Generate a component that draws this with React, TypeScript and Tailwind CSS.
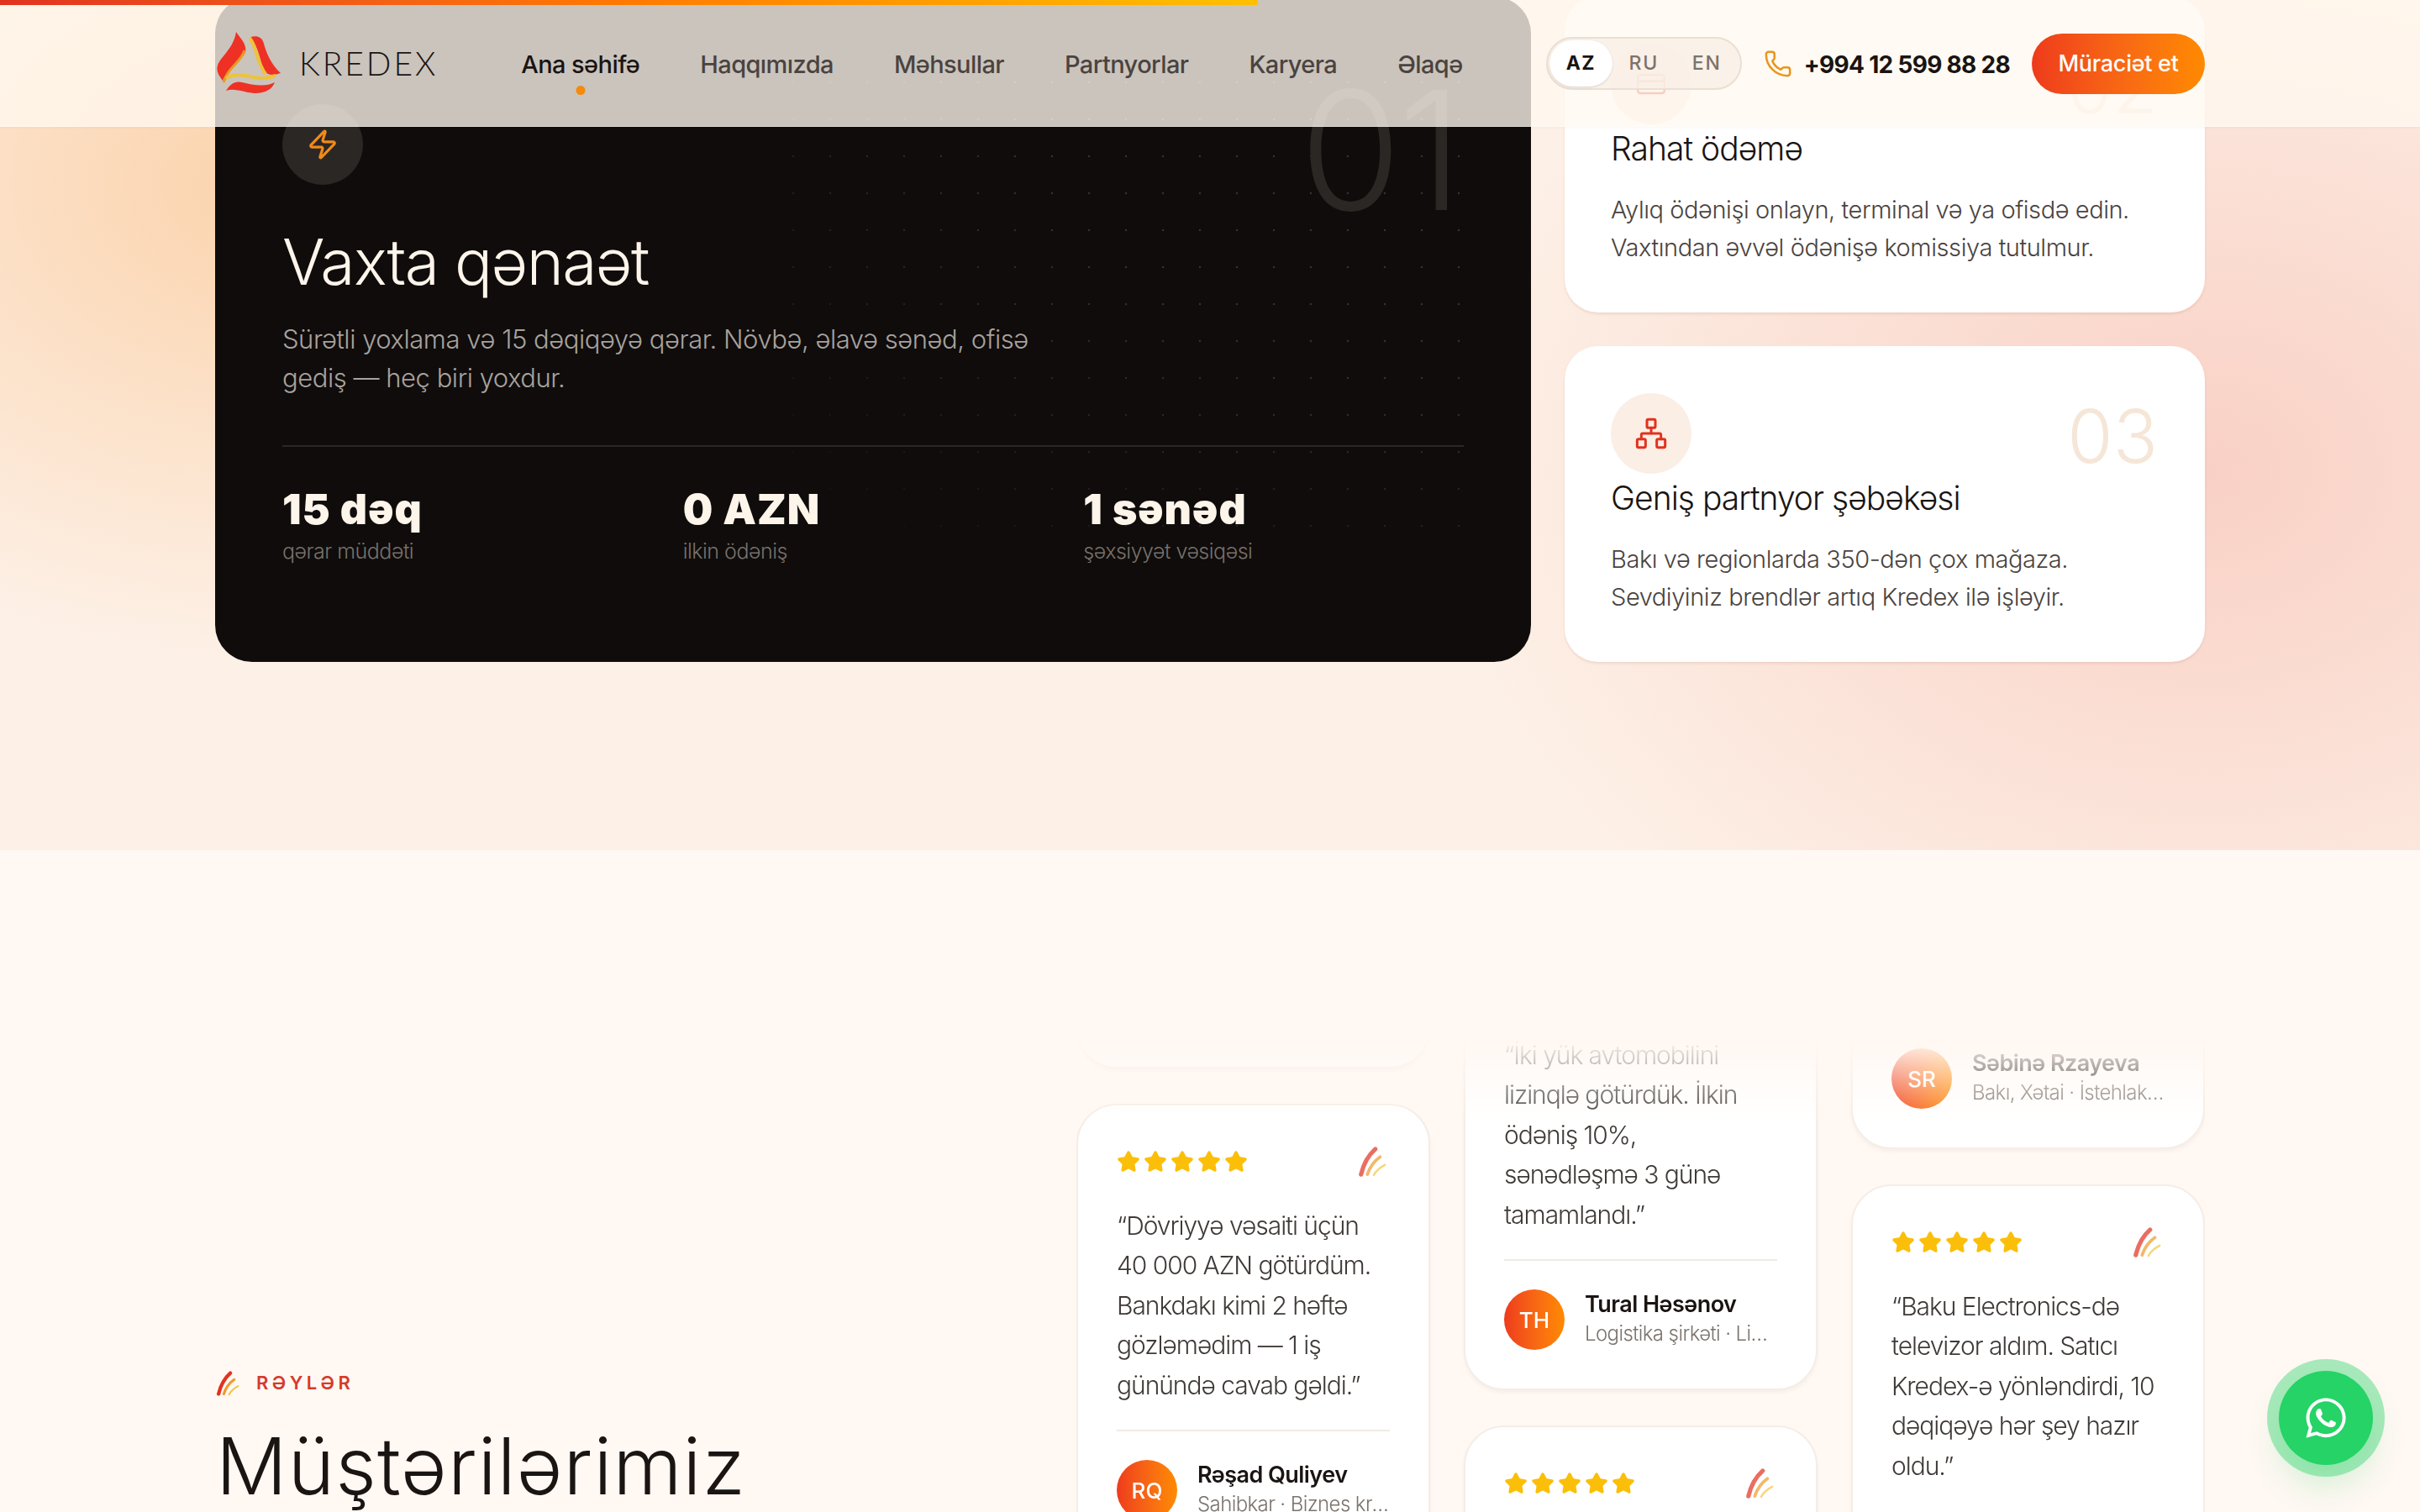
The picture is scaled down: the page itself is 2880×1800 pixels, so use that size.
import { CreditCard, Network, Phone, Star, Zap } from 'lucide-react';
import { FaWhatsapp } from 'react-icons/fa';

const navItems = ['Ana səhifə', 'Haqqımızda', 'Məhsullar', 'Partnyorlar', 'Karyera', 'Əlaqə'];

const stats = [
  { value: '15 dəq', label: 'qərar müddəti' },
  { value: '0 AZN', label: 'ilkin ödəniş' },
  { value: '1 sənəd', label: 'şəxsiyyət vəsiqəsi' },
];

type Review = {
  quote?: string[];
  name?: string;
  role?: string;
  initials?: string;
};

const columns: { offset: string; reviews: Review[] }[] = [
  {
    offset: '-mt-[508px]',
    reviews: [
      {},
      {
        quote: ['“Dövriyyə vəsaiti üçün', '40 000 AZN götürdüm.', 'Bankdakı kimi 2 həftə', 'gözləmədim — 1 iş', 'günündə cavab gəldi.”'],
        name: 'Rəşad Quliyev',
        role: 'Sahibkar · Biznes kredit',
        initials: 'RQ',
      },
    ],
  },
  {
    offset: '-mt-[125px]',
    reviews: [
      {
        quote: ['“İki yük avtomobilini', 'lizinqlə götürdük. İlkin', 'ödəniş 10%,', 'sənədləşmə 3 günə', 'tamamlandı.”'],
        name: 'Tural Həsənov',
        role: 'Logistika şirkəti · Lizinq',
        initials: 'TH',
      },
      {},
    ],
  },
  {
    offset: '-mt-[412px]',
    reviews: [
      { name: 'Səbinə Rzayeva', role: 'Bakı, Xətai · İstehlak krediti', initials: 'SR' },
      {
        quote: ['“Baku Electronics-də', 'televizor aldım. Satıcı', 'Kredex-ə yönləndirdi, 10', 'dəqiqəyə hər şey hazır', 'oldu.”'],
      },
    ],
  },
];

function BrandMark({ className }: { className: string }) {
  return (
    <svg viewBox="0 0 36 38" fill="none" strokeLinecap="round" className={className}>
      <path d="M22 3C13 11 7 22 4 35" stroke="#e1321f" strokeWidth="5.5" />
      <path d="M28 13C21 18 15 26 12 35" stroke="#ef9a2a" strokeWidth="4" />
      <path d="M34 23C28 26 23 30 20 36" stroke="#f4c542" strokeWidth="2.6" />
    </svg>
  );
}

function Logo() {
  return (
    <svg viewBox="0 0 78 74" fill="none" className="h-[74px] w-[78px] shrink-0">
      <path d="M23 0C28 8 36 14 34 24C30 34 14 42 7 58C2 52-1 46 1 40C4 30 20 20 23 0Z" fill="#ee3124" />
      <path d="M33 22C29 36 13 42 8 60" stroke="#e99a20" strokeWidth="3" />
      <path d="M40 6C48 4 54 6 56 14C59 26 66 40 76 49C68 52 60 52 56 46C52 36 50 18 40 6Z" fill="#ee3124" />
      <path d="M39 7C48 18 47 36 58 50" stroke="#eec23a" strokeWidth="4" />
      <path d="M11 70C16 62 22 58 30 60C42 63 58 66 69 60C66 68 58 73 46 73C34 73 22 66 11 70Z" fill="#ee3124" />
      <path d="M11 55C24 47 40 54 50 55C58 56 64 54 70 52" stroke="#eec23a" strokeWidth="4" />
    </svg>
  );
}

function Header() {
  return (
    <header className="absolute inset-x-0 top-0 z-20 h-[151px] border-b border-white/40 bg-[#fff8f0]/78 pt-[4px] shadow-[0_1px_3px_rgba(120,90,70,0.05)]">
      <div className="absolute left-0 top-0 h-[6px] w-[1497px] bg-gradient-to-r from-[#e1321f] via-[#ff7a00] to-[#ffc000]" />
      <div className="mx-auto flex h-full w-[2368px] items-center">
        <div className="-mt-[4px] flex items-center gap-[20px] pl-[2px]">
          <Logo />
          <span className="font-['Lato',sans-serif] text-[39px] font-light leading-none tracking-[0.075em] text-[#1a1412]">KREDEX</span>
        </div>
        <nav className="ml-[99px] flex items-center gap-[72px]">
          {navItems.map((item, i) => (
            <a key={item} className={`relative text-[29px] font-medium tracking-[-0.02em] ${i === 0 ? 'text-[#1a1412]' : 'text-[#4a4340]'}`}>
              {item}
              {i === 0 && <span className="absolute -bottom-[14px] left-1/2 h-[11px] w-[11px] -translate-x-1/2 rounded-full bg-[#f58a0b]" />}
            </a>
          ))}
        </nav>
        <div className="-mt-[4px] ml-auto flex h-[63px] items-center rounded-full border-2 border-[#e9dfd4] bg-[#f9efe5]/80 p-[2px]">
          <span className="flex h-[55px] w-[75px] items-center justify-center rounded-full bg-white text-[23px] font-bold tracking-[0.06em] text-[#1a1412] shadow-sm">AZ</span>
          <span className="flex h-[55px] w-[75px] items-center justify-center text-[23px] font-medium tracking-[0.08em] text-[#7b736c]">RU</span>
          <span className="flex h-[55px] w-[75px] items-center justify-center text-[23px] font-medium tracking-[0.08em] text-[#7b736c]">EN</span>
        </div>
        <Phone className="-mt-[2px] ml-[26px] h-[34px] w-[34px] text-[#e8961e]" strokeWidth={1.8} />
        <span className="ml-[14px] text-[28px] font-bold tracking-[-0.025em] text-[#1a1412]">+994 12 599 88 28</span>
        <button className="-mt-[2px] ml-[26px] flex h-[72px] w-[206px] items-center justify-center rounded-full bg-gradient-to-r from-[#ee3a1c] to-[#ff8a00] text-[27px] font-medium tracking-[-0.01em] text-white">
          Müraciət et
        </button>
      </div>
    </header>
  );
}

function DarkCard() {
  return (
    <div className="relative h-[792px] w-[1566px] shrink-0 overflow-hidden rounded-[44px] bg-[#0f0c0b] px-[80px] pt-[128px]">
      <div className="absolute bottom-[150px] right-[80px] top-[80px] w-[820px] bg-[radial-gradient(circle,rgba(255,255,255,0.16)_1.4px,transparent_1.6px)] bg-[size:44px_44px] [mask-image:radial-gradient(ellipse_at_top_right,black_45%,transparent_100%)]" />
      <span className="absolute right-[85px] top-[65px] text-[196px] font-light leading-[1.2] tracking-[-0.02em] text-[#2b2724]">01</span>
      <div className="relative flex h-[96px] w-[96px] items-center justify-center rounded-full bg-[#2b2724]">
        <Zap className="h-[38px] w-[38px] text-[#f08a1a]" strokeWidth={2} />
      </div>
      <h3 className="relative mt-[44px] text-[75px] font-light leading-[96px] tracking-[-0.02em] text-[#fdf4ea]">Vaxta qənaət</h3>
      <p className="relative mt-[21px] w-[960px] text-[31px] font-light leading-[46px] tracking-[-0.015em] text-[#a8a29e]">
        Sürətli yoxlama və 15 dəqiqəyə qərar. Növbə, əlavə sənəd, ofisə gediş — heç biri yoxdur.
      </p>
      <div className="relative mt-[57px] grid grid-cols-3 gap-[24px] border-t-2 border-[#2a2726] pt-[46px]">
        {stats.map((s) => (
          <div key={s.label}>
            <div className="text-[50px] font-black leading-[56px] tracking-[0.02em] text-[#fdf4ea]">{s.value}</div>
            <div className="mt-[4px] text-[25px] font-light leading-[36px] tracking-[-0.02em] text-[#77716c]">{s.label}</div>
          </div>
        ))}
      </div>
    </div>
  );
}

function FeatureCard({ num, title, lines, icon }: { num: string; title: string; lines: string[]; icon: React.ReactNode }) {
  return (
    <div className="relative h-[376px] rounded-[40px] bg-white px-[55px] pt-[56px] shadow-[0_2px_3px_rgba(150,100,80,0.14)]">
      <span className="absolute right-[56px] top-[59px] text-[88px] font-light leading-[1.1] text-[#f5e6d8]">{num}</span>
      <div className="flex h-[96px] w-[96px] items-center justify-center rounded-full bg-[#fbeee4]">{icon}</div>
      <h3 className="text-[39px] font-[350] leading-[58px] tracking-[-0.025em] text-[#1a1412]">{title}</h3>
      <div className="mt-[22px]">
        {lines.map((l) => (
          <p key={l} className="text-[29px] font-light leading-[44.5px] tracking-[-0.015em] text-[#4a4340]">{l}</p>
        ))}
      </div>
    </div>
  );
}

function ReviewCard({ quote, name, role, initials }: Review) {
  return (
    <div className="flex h-[544px] w-[421px] shrink-0 flex-col rounded-[48px] border-2 border-[#f5ede6] bg-white px-[46px] pb-[46px] pt-[47px] shadow-[0_3px_4px_rgba(120,90,70,0.06)]">
      <div className="flex h-[40px] items-center justify-between">
        <div className="flex gap-[4px]">
          {[0, 1, 2, 3, 4].map((n) => (
            <Star key={n} className="h-[28px] w-[28px] fill-[#fbbf0a] text-[#fbbf0a]" />
          ))}
        </div>
        <BrandMark className="mr-[4px] h-[36px] w-[34px] opacity-70" />
      </div>
      {quote && (
        <div className="mt-[33px]">
          {quote.map((l) => (
            <p key={l} className="whitespace-nowrap text-[30px] font-light leading-[47.4px] tracking-[-0.035em] text-[#3f3a37]">{l}</p>
          ))}
        </div>
      )}
      {name && (
        <div className="mt-auto">
          {quote && <div className="mb-[34px] border-t-2 border-[#efeae6]" />}
          <div className="flex items-center gap-[24px]">
            <div className="flex h-[72px] w-[72px] shrink-0 items-center justify-center rounded-full bg-gradient-to-r from-[#ee3a1c] to-[#ff8a00] text-[26px] font-medium text-white">
              {initials}
            </div>
            <div className="-mt-[3px] min-w-0 flex-1">
              <div className="truncate text-[27px] font-semibold leading-[36px] tracking-[-0.02em] text-[#1a1412]">{name}</div>
              <div className="truncate text-[24px] font-light leading-[34px] tracking-[-0.025em] text-[#7b736c]">{role}</div>
            </div>
          </div>
        </div>
      )}
    </div>
  );
}

export default function App() {
  return (
    <div className="relative h-[1800px] w-full overflow-hidden bg-[#fff8f3] font-['Inter',sans-serif]">
      <Header />

      <section className="h-[1012px] bg-[#fdf0e6] bg-[radial-gradient(ellipse_760px_560px_at_320px_220px,#fbd3ac,transparent),radial-gradient(ellipse_900px_700px_at_2620px_560px,#f9d0c5,transparent)]">
        <div className="mx-auto flex w-[2368px] gap-[40px]">
          <div className="-mt-[4px]">
            <DarkCard />
          </div>
          <div className="-mt-[4px] flex flex-1 flex-col gap-[40px]">
            <FeatureCard
              num="02"
              title="Rahat ödəmə"
              lines={['Aylıq ödənişi onlayn, terminal və ya ofisdə edin.', 'Vaxtından əvvəl ödənişə komissiya tutulmur.']}
              icon={<CreditCard className="h-[38px] w-[38px] text-[#e1321f]" strokeWidth={1.6} />}
            />
            <FeatureCard
              num="03"
              title="Geniş partnyor şəbəkəsi"
              lines={['Bakı və regionlarda 350-dən çox mağaza.', 'Sevdiyiniz brendlər artıq Kredex ilə işləyir.']}
              icon={<Network className="h-[40px] w-[40px] text-[#e1321f]" strokeWidth={1.8} />}
            />
          </div>
        </div>
      </section>

      <section className="mx-auto flex w-[2368px] justify-between pt-[224px]">
        <div className="pl-[1px] pt-[394px]">
          <div className="flex items-center gap-[20px]">
            <BrandMark className="h-[30px] w-[28px]" />
            <span className="text-[22px] font-semibold tracking-[0.2em] text-[#d63a2a]">RƏYLƏR</span>
          </div>
          <h2 className="mt-[31px] text-[94px] font-light leading-[1.1] tracking-[0.012em] text-[#1a1412]">Müştərilərimiz</h2>
        </div>
        <div className="flex h-[640px] gap-[40px] overflow-hidden [mask-image:linear-gradient(to_bottom,transparent,black_100px)]">
          {columns.map((col) => (
            <div key={col.offset} className={`flex flex-col gap-[42px] ${col.offset}`}>
              {col.reviews.map((r, i) => (
                <ReviewCard key={i} {...r} />
              ))}
            </div>
          ))}
        </div>
      </section>

      <a className="absolute bottom-[56px] right-[56px] z-30 flex h-[112px] w-[112px] items-center justify-center rounded-full bg-[#25d366] text-white shadow-[0_0_0_14px_rgba(37,211,102,0.4),0_24px_40px_rgba(37,211,102,0.2)]">
        <FaWhatsapp className="h-[54px] w-[54px]" />
      </a>
    </div>
  );
}
